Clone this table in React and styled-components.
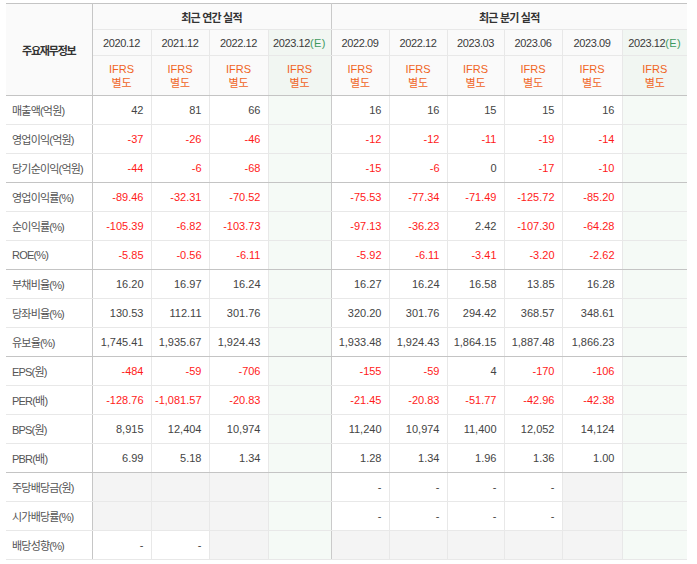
import React from 'react'
import styled, { createGlobalStyle, css } from 'styled-components'

const GlobalStyle = createGlobalStyle`
  html, body {
    margin: 0;
    padding: 0;
    background: #fff;
  }
  body {
    font-family: 'Liberation Sans', 'Noto Sans CJK KR', sans-serif;
  }
`

// Styling - Start
const Wrapper = styled.section`
  padding: 3px 10px 0 6px;
`

const Table = styled.table`
  width: 681px;
  border-collapse: collapse;
  table-layout: fixed;
  border-top: 1px solid #c4c4c4;
  border-bottom: 1px solid #c4c4c4;
  font-size: 11px;
  color: #444;
`

const lineLeft = css`
  border-left: 1px solid ${(p) => (p.$section ? '#cacaca' : '#e8e8e8')};
`

const Corner = styled.th`
  background: #fafafa;
  color: #333;
  font-weight: bold;
  letter-spacing: -1.2px;
  border-right: 1px solid #c6c6c6;
  border-bottom: 1px solid #c4c4c4;
  padding: 0;
`

const GroupHead = styled.th`
  height: 25px;
  background: #fafafa;
  color: #333;
  font-weight: bold;
  letter-spacing: -0.8px;
  border-bottom: 1px solid #e8e8e8;
  ${lineLeft}
  padding: 0;
`

const YearHead = styled.th`
  height: 25px;
  font-weight: normal;
  color: #3a3a3a;
  letter-spacing: -0.4px;
  background: ${(p) => (p.$est ? '#f1f6f2' : '#fafafa')};
  border-bottom: 1px solid #e8e8e8;
  ${lineLeft}
  padding: 0;
  white-space: nowrap;

  em {
    font-style: normal;
    color: #3f9a5f;
    letter-spacing: 0.4px;
  }
`

const StdHead = styled.th`
  height: 39px;
  font-weight: normal;
  color: #f0641e;
  line-height: 14px;
  background: ${(p) => (p.$est ? '#f1f6f2' : '#fafafa')};
  border-bottom: 1px solid #c4c4c4;
  ${lineLeft}
  padding: 0;
`

const Row = styled.tr`
  td,
  th {
    border-bottom: 1px solid ${(p) => (p.$groupEnd ? '#c4c4c4' : '#e8e8e8')};
  }
`

const Label = styled.th`
  height: 28px;
  text-align: left;
  font-weight: normal;
  color: #555;
  letter-spacing: -0.8px;
  padding: 0 0 0 6px;
  border-right: 1px solid #c6c6c6;
  white-space: nowrap;
`

const Value = styled.td`
  text-align: right;
  padding: 0 7px 0 0;
  white-space: nowrap;
  color: ${(p) => (p.$neg ? '#ff1a1a' : '#444')};
  background: ${(p) => (p.$est ? '#f5faf6' : p.$empty ? '#f4f4f4' : '#fff')};
  ${lineLeft}
`
// Styling - End

const annual = ['2020.12', '2021.12', '2022.12']
const quarter = ['2022.09', '2022.12', '2023.03', '2023.06', '2023.09']
const widths = [86, 59, 58, 59, 63, 58, 58, 57, 58, 60, 65]

// each row: 3 annual values, 5 quarter values (null = empty grey cell)
const rows = [
  { label: '매출액(억원)', a: ['42', '81', '66'], q: ['16', '16', '15', '15', '16'] },
  { label: '영업이익(억원)', a: ['-37', '-26', '-46'], q: ['-12', '-12', '-11', '-19', '-14'] },
  { label: '당기순이익(억원)', a: ['-44', '-6', '-68'], q: ['-15', '-6', '0', '-17', '-10'], end: true },
  { label: '영업이익률(%)', a: ['-89.46', '-32.31', '-70.52'], q: ['-75.53', '-77.34', '-71.49', '-125.72', '-85.20'] },
  { label: '순이익률(%)', a: ['-105.39', '-6.82', '-103.73'], q: ['-97.13', '-36.23', '2.42', '-107.30', '-64.28'] },
  { label: 'ROE(%)', a: ['-5.85', '-0.56', '-6.11'], q: ['-5.92', '-6.11', '-3.41', '-3.20', '-2.62'], end: true },
  { label: '부채비율(%)', a: ['16.20', '16.97', '16.24'], q: ['16.27', '16.24', '16.58', '13.85', '16.28'] },
  { label: '당좌비율(%)', a: ['130.53', '112.11', '301.76'], q: ['320.20', '301.76', '294.42', '368.57', '348.61'] },
  { label: '유보율(%)', a: ['1,745.41', '1,935.67', '1,924.43'], q: ['1,933.48', '1,924.43', '1,864.15', '1,887.48', '1,866.23'], end: true },
  { label: 'EPS(원)', a: ['-484', '-59', '-706'], q: ['-155', '-59', '4', '-170', '-106'] },
  { label: 'PER(배)', a: ['-128.76', '-1,081.57', '-20.83'], q: ['-21.45', '-20.83', '-51.77', '-42.96', '-42.38'] },
  { label: 'BPS(원)', a: ['8,915', '12,404', '10,974'], q: ['11,240', '10,974', '11,400', '12,052', '14,124'] },
  { label: 'PBR(배)', a: ['6.99', '5.18', '1.34'], q: ['1.28', '1.34', '1.96', '1.36', '1.00'], end: true },
  { label: '주당배당금(원)', a: [null, null, null], q: ['-', '-', '-', '-', null] },
  { label: '시가배당률(%)', a: [null, null, null], q: ['-', '-', '-', '-', null] },
  { label: '배당성향(%)', a: ['-', '-', null], q: [null, null, null, null, null] },
]

const isNeg = (v) => v && v.startsWith('-') && v.length > 1

const Cell = ({ v, section }) => (
  <Value $neg={isNeg(v)} $empty={v === null} $section={section}>
    {v}
  </Value>
)

const Year = ({ label, est, section }) => (
  <YearHead $est={est} $section={section}>
    {label}
    {est && <em>(E)</em>}
  </YearHead>
)

const Std = ({ est, section }) => (
  <StdHead $est={est} $section={section}>
    IFRS
    <br />
    별도
  </StdHead>
)

function App() {
  return (
    <Wrapper>
      <GlobalStyle />
      <Table>
        <colgroup>
          {widths.map((w, i) => (
            <col key={i} style={{ width: w }} />
          ))}
        </colgroup>
        <thead>
          <tr>
            <Corner rowSpan={3}>주요재무정보</Corner>
            <GroupHead colSpan={4}>최근 연간 실적</GroupHead>
            <GroupHead colSpan={6} $section>
              최근 분기 실적
            </GroupHead>
          </tr>
          <tr>
            {annual.map((y) => (
              <Year key={'a' + y} label={y} />
            ))}
            <Year label='2023.12' est />
            {quarter.map((y, i) => (
              <Year key={'q' + y} label={y} section={i === 0} />
            ))}
            <Year label='2023.12' est />
          </tr>
          <tr>
            {annual.map((y) => (
              <Std key={'a' + y} />
            ))}
            <Std est />
            {quarter.map((y, i) => (
              <Std key={'q' + y} section={i === 0} />
            ))}
            <Std est />
          </tr>
        </thead>
        <tbody>
          {rows.map((r) => (
            <Row key={r.label} $groupEnd={r.end}>
              <Label>{r.label}</Label>
              {r.a.map((v, i) => (
                <Cell key={'a' + i} v={v} />
              ))}
              <Value $est />
              {r.q.map((v, i) => (
                <Cell key={'q' + i} v={v} section={i === 0} />
              ))}
              <Value $est />
            </Row>
          ))}
        </tbody>
      </Table>
    </Wrapper>
  )
}

export default App
